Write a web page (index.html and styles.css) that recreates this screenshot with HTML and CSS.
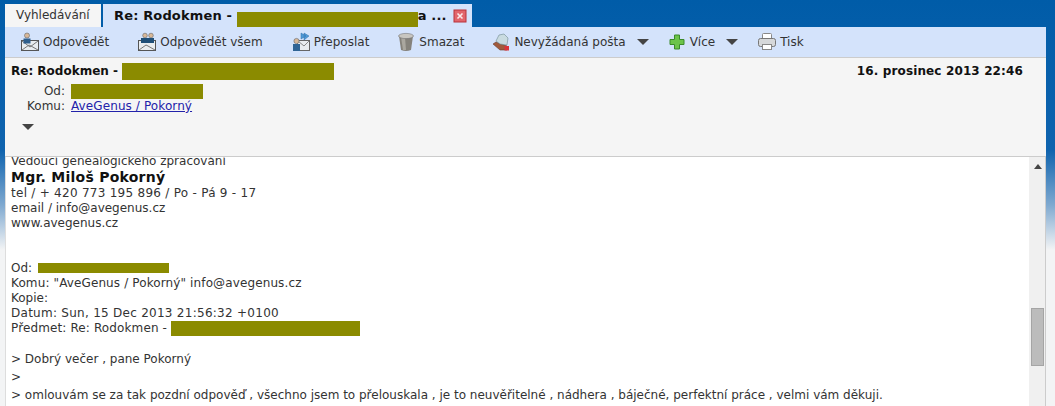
FILE: index.html

```html
<!DOCTYPE html>
<html lang="cs">
<head>
  <meta charset="UTF-8" />
  <title>Re: Rodokmen</title>
  <link rel="stylesheet" href="styles.css">
</head>
<body>

<div class="mail-window">
  <div class="tabs">
    <div class="tab">Vyhledávání</div>
    <div class="tab tab-active">
      <span class="tab-title">Re: Rodokmen - <span class="redact redact-tab"></span>a ...</span>
      <svg class="tab-close" width="14" height="14" viewBox="0 0 14 14">
        <rect x="1" y="1" width="12" height="12" fill="#e2656b" stroke="#b8323a"/>
        <path d="M4.5 4.5l5 5M9.5 4.5l-5 5" stroke="#fbe9ea" stroke-width="1.6"/>
      </svg>
    </div>
  </div>

  <div class="toolbar">
    <div class="tool">
      <svg width="18" height="20" viewBox="0 0 18 20">
        <rect x="0.5" y="8.5" width="17" height="10" fill="#e9edf0" stroke="#555"/>
        <path d="M1 18l7-5 2 1 7 4M1 9l8 6 8-6" fill="none" stroke="#777"/>
        <circle cx="6" cy="3.5" r="2.5" fill="#d8b898" stroke="#666" stroke-width=".6"/>
        <rect x="2.5" y="6.5" width="7" height="5" fill="#2f5f8c"/>
      </svg>
      <span>Odpovědět</span>
    </div>
    <div class="tool">
      <svg width="18" height="20" viewBox="0 0 18 20">
        <rect x="0.5" y="8.5" width="17" height="10" fill="#e9edf0" stroke="#555"/>
        <path d="M1 18l7-5 2 1 7 4" fill="none" stroke="#777"/>
        <circle cx="7" cy="3.5" r="2.3" fill="#d8b898" stroke="#666" stroke-width=".6"/>
        <circle cx="13" cy="3.5" r="2.3" fill="#d8b898" stroke="#666" stroke-width=".6"/>
        <rect x="3" y="6" width="13" height="5" fill="#1f4f78"/>
      </svg>
      <span>Odpovědět všem</span>
    </div>
    <div class="tool">
      <svg width="18" height="20" viewBox="0 0 18 20">
        <rect x="5.5" y="8.5" width="12" height="10" fill="#e9edf0" stroke="#666"/>
        <path d="M6 9l6 5 5-5" fill="none" stroke="#888"/>
        <path d="M9 1l5 3-5 3zM12 1l5 3-5 4z" fill="#4f9ad8" stroke="#2f6ea8" stroke-width=".5"/>
        <circle cx="4.5" cy="9" r="2.6" fill="#d8b898" stroke="#666" stroke-width=".6"/>
        <rect x="1" y="12" width="7" height="7" fill="#2f6494"/>
      </svg>
      <span>Přeposlat</span>
    </div>
    <div class="tool">
      <svg width="17" height="20" viewBox="0 0 17 20">
        <path d="M1 4l2 14q5 2 10 0l2-14z" fill="#85827b"/>
        <path d="M3 5l2 13h3l-1-13z" fill="#aaa79f"/>
        <ellipse cx="8" cy="4" rx="7.5" ry="2.6" fill="#c8c6c0" stroke="#777" stroke-width=".6"/>
      </svg>
      <span>Smazat</span>
    </div>
    <div class="tool tool-spam">
      <svg width="18" height="20" viewBox="0 0 18 20">
        <path d="M1 12l3-2 11 4v4H8z" fill="#a05a3c" stroke="#6a3a28" stroke-width=".6"/>
        <path d="M4 9l3-6 5-1 4 4-1 7-7-1z" fill="#c9dbe0" stroke="#6f8a90" stroke-width=".6"/>
        <rect x="12.500" y="14" width="4.500" height="4.500" fill="#d9343a"/>
      </svg>
      <span>Nevyžádaná pošta</span>
      <i class="caret caret-gap"></i>
    </div>
    <div class="tool">
      <svg class="icon-plus" width="16" height="16" viewBox="0 0 16 16">
        <path d="M5.5 1h5v4.500h4.500v5h-4.500v4.500h-5v-4.500h-4.500v-5h4.500z" fill="#6cc44a" stroke="#3b8a2a"/>
      </svg>
      <span>Více</span>
      <i class="caret caret-gap"></i>
    </div>
    <div class="tool">
      <svg width="18" height="20" viewBox="0 0 18 20">
        <rect x="4.500" y="1.500" width="9" height="6" rx="1" fill="#fff" stroke="#888"/>
        <rect x="0.500" y="6.500" width="17" height="8" rx="2" fill="#d6d8da" stroke="#777"/>
        <rect x="4.500" y="12.500" width="9" height="5" fill="#fff" stroke="#888"/>
      </svg>
      <span>Tisk</span>
    </div>
  </div>

  <div class="mail-head">
    <div class="subject-row">
      <span>Re: Rodokmen - <span class="redact redact-subject"></span></span>
      <span class="mail-date">16. prosinec 2013 22:46</span>
    </div>
    <div class="meta">
      <span class="meta-label">Od:</span>
      <span><span class="redact redact-from"></span></span>
      <span class="meta-label">Komu:</span>
      <a href="#">AveGenus / Pokorný</a>
    </div>
    <i class="caret caret-more"></i>
  </div>

  <div class="mail-view">
    <div class="mail-body">
      <div class="line">Vedoucí genealogického zpracování</div>
      <div class="line name">Mgr. Miloš Pokorný</div>
      <div class="line wide">tel / + 420 773 195 896 / Po - Pá 9 - 17</div>
      <div class="line">email / info@avegenus.cz</div>
      <div class="line">www.avegenus.cz</div>
      <div class="line"></div>
      <div class="line"></div>
      <div class="line">Od: <span class="redact redact-body-from"></span></div>
      <div class="line semi-wide">Komu: "AveGenus / Pokorný" info@avegenus.cz</div>
      <div class="line">Kopie:</div>
      <div class="line wide">Datum: Sun, 15 Dec 2013 21:56:32 +0100</div>
      <div class="line semi-wide">Předmet: Re: Rodokmen - <span class="redact redact-body-subject"></span></div>
      <div class="line line-short"></div>
      <div class="quote">&gt; Dobrý večer , pane Pokorný</div>
      <div class="quote">&gt;</div>
      <div class="quote">&gt; omlouvám se za tak pozdní odpověď , všechno jsem to přelouskala , je to neuvěřitelné , nádhera , báječné, perfektní práce , velmi vám děkuji.</div>
    </div>
    <div class="scrollbar">
      <i class="scroll-up"></i>
      <div class="scroll-thumb"></div>
    </div>
  </div>
</div>

</body>
</html>
```

FILE: styles.css

```css
html, body {
  height: 100%;
  margin: 0;
  overflow: hidden;
}
body {
  font-family: "DejaVu Sans", Verdana, sans-serif;
  font-size: 12px;
  color: #333;
  background: linear-gradient(#005ca8 0, #0f63ae 150px, #7fa9d0 205px, #f3f4f5 250px);
}
.mail-window {
  display: flex;
  flex-direction: column;
  height: 100%;
  margin: 0 9px 0 5px;
}
.redact {
  display: inline-block;
  background-color: #8b8b00;
  vertical-align: middle;
}

/* tabs */
.tabs {
  display: flex;
  gap: 2px;
  height: 23px;
  padding-top: 4px;
  flex: none;
}
.tab {
  width: 85px;
  padding: 3px 0 0 11px;
  background-color: #f5f5f5;
  line-height: 17px;
}
.tab-active {
  display: flex;
  justify-content: space-between;
  width: 358px;
  padding-left: 11px;
  background-color: #d4e3fb;
  font-size: 13px;
  font-weight: bold;
  letter-spacing: 0.15px;
  color: #111;
}
.tab-title {
  white-space: nowrap;
}
.redact-tab {
  width: 181px;
  height: 18px;
  margin: 2px 0 -6px 0;
}
.tab-close {
  margin: 2px 5px 0 0;
}

/* toolbar */
.toolbar {
  display: flex;
  align-items: center;
  gap: 29px;
  flex: none;
  height: 30px;
  padding-left: 16px;
  background-color: #d4e3fb;
  border-bottom: 1px solid #ccc;
}
.tool {
  display: flex;
  align-items: center;
  gap: 4px;
  white-space: nowrap;
}
.tool-spam {
  margin-left: -1px;
}
.caret {
  display: block;
  width: 0;
  height: 0;
  border-left: 6px solid transparent;
  border-right: 6px solid transparent;
  border-top: 6px solid #444;
}
.caret-gap {
  margin: 0 -9px 0 7px;
}
.icon-plus {
  margin-right: 1px;
}

/* message head */
.mail-head {
  flex: none;
  height: 98px;
  padding: 0 23px 0 6px;
  background-color: #f5f5f5;
  border-bottom: 1px solid #ccc;
}
.subject-row {
  display: flex;
  justify-content: space-between;
  padding-top: 5px;
  height: 21px;
  line-height: 17px;
  font-weight: bold;
  color: #111;
}
.mail-date {
  letter-spacing: 0.13px;
}
.redact-subject {
  width: 212px;
  height: 17px;
  margin-top: -1px;
}
.meta {
  display: grid;
  grid-template-columns: 54px auto;
  justify-content: start;
  column-gap: 6px;
  line-height: 15px;
}
.meta-label {
  text-align: right;
}
.meta a {
  color: #2222aa;
  letter-spacing: 0.1px;
}
.redact-from {
  width: 132px;
  height: 15px;
}
.caret-more {
  margin: 10px 0 0 11px;
}

/* message body */
.mail-view {
  display: flex;
  flex: 1;
  min-height: 0;
  background-color: #fff;
  border-left: 1px solid #ddd;
  border-right: 1px solid #ccc;
}
.mail-body {
  flex: 1;
  min-width: 0;
  overflow: hidden;
  padding-left: 5px;
  white-space: nowrap;
}
.line {
  height: 15px;
  line-height: 15px;
}
.line:first-child {
  margin-top: -3px;
  height: 16px;
}
.line-short {
  height: 14px;
}
.name {
  height: 16px;
  font-size: 14px;
  font-weight: bold;
  letter-spacing: 0.25px;
  color: #111;
}
.wide {
  letter-spacing: 0.27px;
}
.semi-wide {
  letter-spacing: 0.12px;
}
.quote {
  height: 18px;
  line-height: 18px;
}
.redact-body-from {
  width: 131px;
  height: 10px;
  margin: -1px 0 0 2px;
}
.redact-body-subject {
  width: 189px;
  height: 15px;
}
.scrollbar {
  position: relative;
  flex: none;
  width: 16px;
  background-color: #f0f0f0;
}
.scroll-up {
  position: absolute;
  top: 7px;
  left: 5px;
  width: 0;
  height: 0;
  border-left: 4px solid transparent;
  border-right: 4px solid transparent;
  border-bottom: 5px solid #444;
}
.scroll-thumb {
  position: absolute;
  top: 151px;
  left: 2px;
  width: 11px;
  height: 56px;
  background-color: #bcbcbc;
  border: 1px solid #a5a5a5;
}
```
